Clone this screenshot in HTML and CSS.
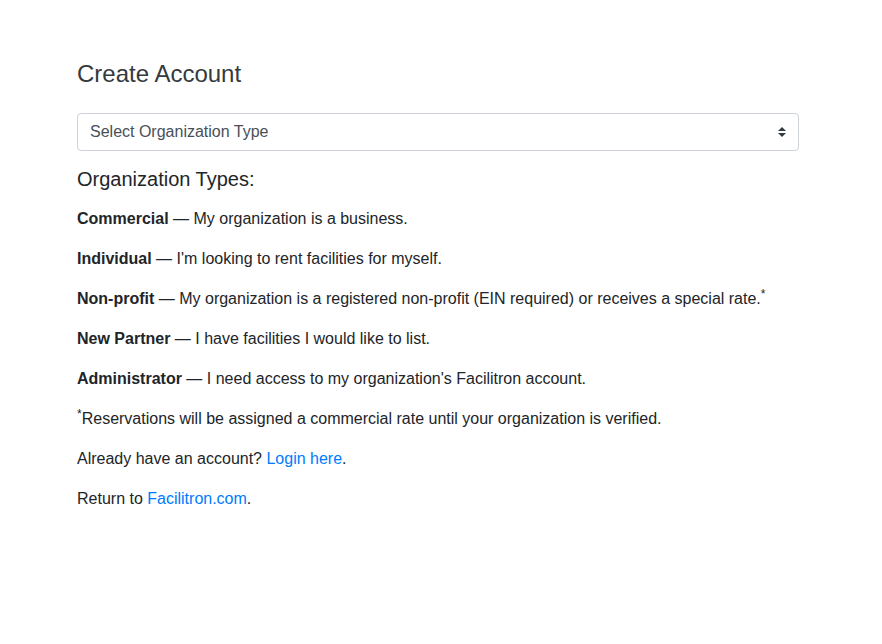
FILE: index.html
```html
<!DOCTYPE html>
<html lang="en">
<head>
<meta charset="utf-8">
<title>Create Account</title>
<link rel="stylesheet" href="styles.css">
</head>
<body>
<main class="page">
  <h4 class="title">Create Account</h4>
  <div class="form-group">
    <div class="select">
      <span class="select-label">Select Organization Type</span>
      <svg class="select-arrow" width="8" height="10" viewBox="0 0 4 5" aria-hidden="true"><path fill="#343a40" d="M2 0L0 2h4zm0 5L0 3h4z"/></svg>
    </div>
  </div>
  <h5 class="subtitle">Organization Types:</h5>
  <p><strong>Commercial</strong> — My organization is a business.</p>
  <p><strong>Individual</strong> — I'm looking to rent facilities for myself.</p>
  <p><strong>Non-profit</strong> — My organization is a registered non-profit (EIN required) or receives a special rate.<sup>*</sup></p>
  <p><strong>New Partner</strong> — I have facilities I would like to list.</p>
  <p><strong>Administrator</strong> — I need access to my organization's Facilitron account.</p>
  <p><sup>*</sup>Reservations will be assigned a commercial rate until your organization is verified.</p>
  <p>Already have an account? <a href="#">Login here</a>.</p>
  <p>Return to <a href="#">Facilitron.com</a>.</p>
</main>
</body>
</html>
```
FILE: styles.css
```css
* { box-sizing: border-box; }
html, body { margin: 0; padding: 0; background: #fff; }
body {
  font-family: "Liberation Sans", Arial, Helvetica, sans-serif;
  font-size: 16px;
  line-height: 1.5;
  color: #212529;
}
.page {
  width: 722px;
  margin-left: 77px;
  padding-top: 60px;
}
.title {
  font-size: 24px;
  font-weight: 400;
  line-height: 1.2;
  color: #343a40;
  margin: 0 0 24px;
}
.form-group { margin-bottom: 16px; }
.select {
  display: flex;
  align-items: center;
  justify-content: space-between;
  height: 38px;
  padding: 6px 12px;
  border: 1px solid #ced4da;
  border-radius: 4px;
  color: #495057;
}
.select-arrow { display: block; }
.subtitle {
  font-size: 20px;
  font-weight: 400;
  line-height: 1.2;
  margin: 0 0 16px;
}
p { margin: 0 0 16px; }
strong { font-weight: 700; }
sup { font-size: 75%; line-height: 0; position: relative; vertical-align: baseline; top: -0.5em; }
a { color: #007bff; text-decoration: none; }
```
